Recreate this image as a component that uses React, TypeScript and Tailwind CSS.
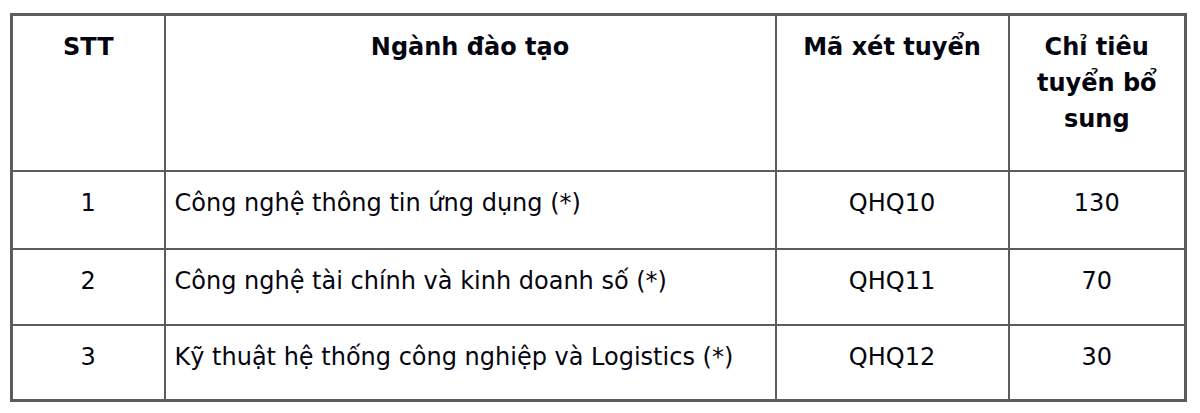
import React from "react";

const rows = [
  { stt: "1", name: "Công nghệ thông tin ứng dụng (*)", code: "QHQ10", quota: "130", h: "h-[78px]" },
  { stt: "2", name: "Công nghệ tài chính và kinh doanh số (*)", code: "QHQ11", quota: "70", h: "h-[76px]" },
  { stt: "3", name: "Kỹ thuật hệ thống công nghiệp và Logistics (*)", code: "QHQ12", quota: "30", h: "h-[76px]" },
];

export default function App() {
  return (
    <div className="w-[1200px] h-[413px] bg-white pt-[13px] pl-[10px]" style={{ fontFamily: '"DejaVu Sans", Verdana, sans-serif' }}>
      <table className="table-fixed border-collapse border-[3px] border-[#5c5c5c] text-[24px] leading-[36px] text-[#05050f]">
        <colgroup>
          <col className="w-[153px]" />
          <col className="w-[611px]" />
          <col className="w-[233px]" />
          <col className="w-[177px]" />
        </colgroup>
        <thead>
          <tr className="h-[156px]">
            <th className="border-2 border-[#5c5c5c] align-top text-center font-bold pt-[13px] px-2">STT</th>
            <th className="border-2 border-[#5c5c5c] align-top text-center font-bold pt-[13px] px-2">Ngành đào tạo</th>
            <th className="border-2 border-[#5c5c5c] align-top text-center font-bold pt-[13px] px-2">Mã xét tuyển</th>
            <th className="border-2 border-[#5c5c5c] align-top text-center font-bold pt-[13px] px-3">Chỉ tiêu tuyển bổ sung</th>
          </tr>
        </thead>
        <tbody>
          {rows.map((r) => (
            <tr key={r.stt} className={r.h}>
              <td className="border-2 border-[#5c5c5c] align-top text-center pt-[13px] px-2">{r.stt}</td>
              <td className="border-2 border-[#5c5c5c] align-top text-left pt-[13px] pl-[9px] pr-2">{r.name}</td>
              <td className="border-2 border-[#5c5c5c] align-top text-center pt-[13px] px-2">{r.code}</td>
              <td className="border-2 border-[#5c5c5c] align-top text-center pt-[13px] px-2">{r.quota}</td>
            </tr>
          ))}
        </tbody>
      </table>
    </div>
  );
}
